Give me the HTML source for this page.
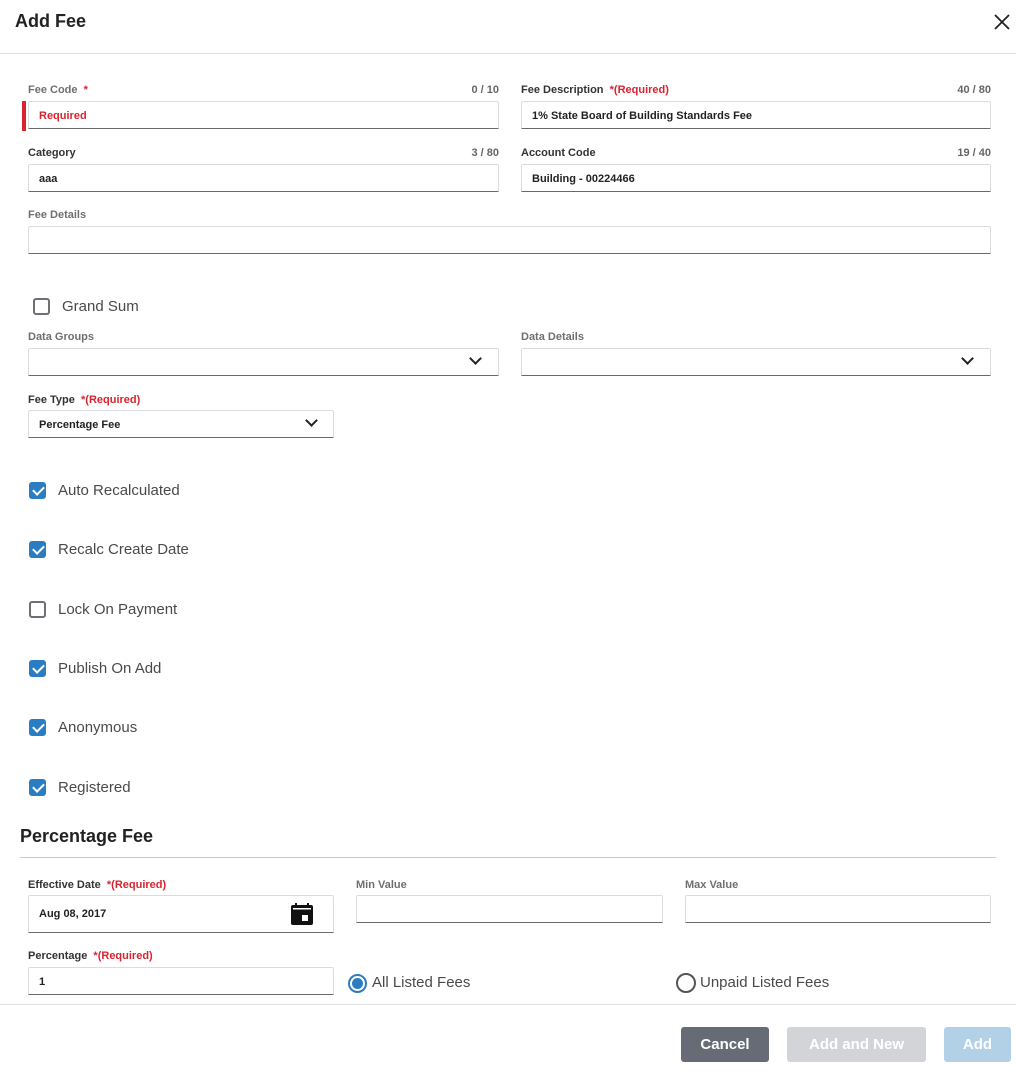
<!DOCTYPE html>
<html><head><meta charset="utf-8"><style>
*{box-sizing:border-box;margin:0;padding:0}
body{width:1016px;height:1072px;background:#fff;font-family:"Liberation Sans",sans-serif;position:relative;overflow:hidden;color:#333}
.a{position:absolute}
.lbl{position:absolute;font-size:11px;font-weight:bold;color:#333;white-space:nowrap;margin-top:1px}
.lbl.g{color:#6f6f6f}
.req{color:#d9232e}
.cnt{position:absolute;font-size:11px;font-weight:bold;color:#666;margin-top:1px}
.in{position:absolute;height:28px;border:1px solid #dcdcdc;border-bottom:1.5px solid #6a6a6a;border-radius:2px 2px 0 0;font-size:11px;font-weight:bold;color:#222;padding:8px 0 0 10px;background:#fff}
.cb{position:absolute;width:17px;height:17px;border:2px solid #6f6f78;border-radius:3px;left:29px}
.cb.on{background:#2a7dc2;border-color:#2a7dc2}
.cb.on:after{content:"";position:absolute;left:4px;top:0px;width:5px;height:9px;border:solid #fff;border-width:0 2.2px 2.2px 0;transform:rotate(45deg)}
.ct{position:absolute;left:58px;font-size:15px;color:#4a4a4a;margin-top:1px}
.chev{position:absolute;width:9px;height:9px;border:solid #222;border-width:0 2px 2px 0;transform:rotate(45deg)}
.btn{position:absolute;top:1027px;height:35px;border-radius:3px;color:#fff;font-weight:bold;font-size:15px;text-align:center;line-height:35px}
</style></head><body>
<div class="a" style="left:15px;top:11px;font-size:18px;font-weight:bold;color:#222">Add Fee</div>
<svg class="a" style="left:994px;top:14px" width="16" height="16" viewBox="0 0 16 16"><path d="M1 1L15 15M15 1L1 15" stroke="#222" stroke-width="1.8"/></svg>
<div class="a" style="left:0;top:53px;width:1016px;height:1px;background:#e0e0e6"></div>

<div class="lbl g" style="left:28px;top:83px">Fee Code <span class="req">&nbsp;*</span></div>
<div class="cnt" style="right:517px;top:83px">0 / 10</div>
<div class="a" style="left:22px;top:101px;width:4px;height:30px;background:#d9232e"></div>
<div class="in" style="left:28px;top:101px;width:471px;color:#d9232e">Required</div>

<div class="lbl" style="left:521px;top:83px">Fee Description <span class="req">&nbsp;*(Required)</span></div>
<div class="cnt" style="right:25px;top:83px">40 / 80</div>
<div class="in" style="left:521px;top:101px;width:470px">1% State Board of Building Standards Fee</div>

<div class="lbl" style="left:28px;top:146px">Category</div>
<div class="cnt" style="right:517px;top:146px">3 / 80</div>
<div class="in" style="left:28px;top:164px;width:471px">aaa</div>

<div class="lbl" style="left:521px;top:146px">Account Code</div>
<div class="cnt" style="right:25px;top:146px">19 / 40</div>
<div class="in" style="left:521px;top:164px;width:470px">Building - 00224466</div>

<div class="lbl g" style="left:28px;top:208px">Fee Details</div>
<div class="in" style="left:28px;top:226px;width:963px"></div>

<div class="cb" style="left:33px;top:298px"></div>
<div class="ct" style="left:62px;top:297px">Grand Sum</div>

<div class="lbl g" style="left:28px;top:330px">Data Groups</div>
<div class="in" style="left:28px;top:348px;width:471px"></div>
<div class="chev" style="left:471px;top:354px"></div>
<div class="lbl g" style="left:521px;top:330px">Data Details</div>
<div class="in" style="left:521px;top:348px;width:470px"></div>
<div class="chev" style="left:963px;top:354px"></div>

<div class="lbl" style="left:28px;top:393px">Fee Type <span class="req">&nbsp;*(Required)</span></div>
<div class="in" style="left:28px;top:410px;width:306px">Percentage Fee</div>
<div class="chev" style="left:307px;top:416px"></div>

<div class="cb on" style="top:482px"></div><div class="ct" style="top:481px">Auto Recalculated</div>
<div class="cb on" style="top:541px"></div><div class="ct" style="top:540px">Recalc Create Date</div>
<div class="cb" style="top:601px"></div><div class="ct" style="top:600px">Lock On Payment</div>
<div class="cb on" style="top:660px"></div><div class="ct" style="top:659px">Publish On Add</div>
<div class="cb on" style="top:719px"></div><div class="ct" style="top:718px">Anonymous</div>
<div class="cb on" style="top:779px"></div><div class="ct" style="top:778px">Registered</div>

<div class="a" style="left:20px;top:826px;font-size:18px;font-weight:bold;color:#222">Percentage Fee</div>
<div class="a" style="left:20px;top:857px;width:976px;height:1px;background:#c8c8c8"></div>

<div class="lbl" style="left:28px;top:878px">Effective Date <span class="req">&nbsp;*(Required)</span></div>
<div class="in" style="left:28px;top:895px;width:306px;height:38px;padding-top:12px">Aug 08, 2017</div>
<svg class="a" style="left:291px;top:903px" width="22" height="22" viewBox="0 0 22 22"><rect x="0" y="2" width="22" height="20" rx="2" fill="#111"/><rect x="4" y="0" width="2" height="4" fill="#111"/><rect x="16" y="0" width="2" height="4" fill="#111"/><rect x="2" y="5" width="18" height="1.5" fill="#fff"/><rect x="11" y="12" width="6" height="6" fill="#fff"/></svg>

<div class="lbl g" style="left:356px;top:878px">Min Value</div>
<div class="in" style="left:356px;top:895px;width:307px"></div>
<div class="lbl g" style="left:685px;top:878px">Max Value</div>
<div class="in" style="left:685px;top:895px;width:306px"></div>

<div class="lbl" style="left:28px;top:949px">Percentage <span class="req">&nbsp;*(Required)</span></div>
<div class="in" style="left:28px;top:967px;width:306px">1</div>

<div class="a" style="left:348px;top:974px;width:19px;height:19px;border-radius:50%;border:2px solid #2a7dc2"><div style="margin:2px;width:11px;height:11px;border-radius:50%;background:#2a7dc2"></div></div>
<div class="a" style="left:372px;top:974px;font-size:15px;color:#4a4a4a">All Listed Fees</div>
<div class="a" style="left:676px;top:973px;width:20px;height:20px;border-radius:50%;border:2px solid #555"></div>
<div class="a" style="left:700px;top:974px;font-size:15px;color:#4a4a4a">Unpaid Listed Fees</div>

<div class="a" style="left:0;top:1004px;width:1016px;height:1px;background:#e0e0e6"></div>
<div class="btn" style="left:681px;width:88px;background:#676b76">Cancel</div>
<div class="btn" style="left:787px;width:139px;background:#d3d4d8">Add and New</div>
<div class="btn" style="left:944px;width:67px;background:#b2d1e6">Add</div>
</body></html>
